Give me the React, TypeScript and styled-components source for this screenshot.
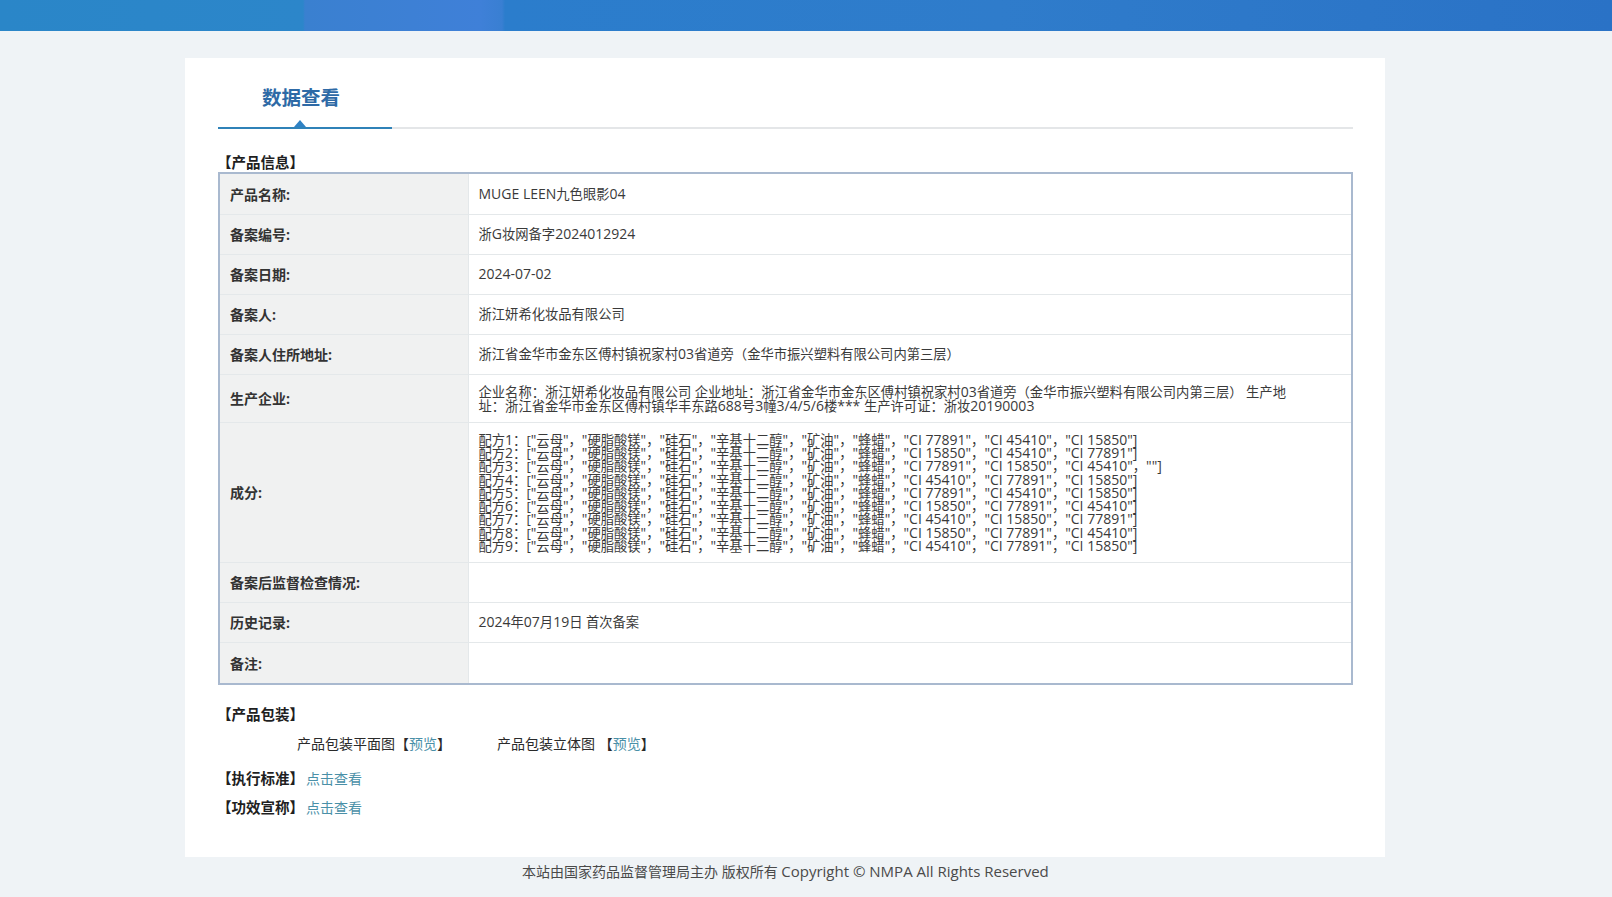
import React from "react";
import styled, { createGlobalStyle } from "styled-components";

const Global = createGlobalStyle`
  html, body { margin: 0; padding: 0; background: #eff3f6; }
  body { font-family: "Open Sans", "Noto Sans CJK SC", sans-serif; color: #333; }
`;
const Page = styled.div`
  width: 1612px;
  height: 897px;
  overflow: hidden;
  display: flex;
  flex-direction: column;
`;
const TopBar = styled.header`
  height: 31px;
  flex: none;
  background: linear-gradient(90deg, #2a86c8 0, #2c86ca 303px, #3a80d0 305px, #3f80d8 480px, #397fd2 502px, #2b7dcc 505px, #2f7ccb 1000px, #2a72c6 1612px);
`;
const Card = styled.main`
  box-sizing: border-box;
  width: 1200px;
  height: 799px;
  margin: 27px 0 0 185px;
  flex: none;
  background: #fff;
  padding: 0 32px 0 33px;
`;
const TabBar = styled.div`
  height: 69px;
  border-bottom: 2px solid #e4e6e8;
  display: flex;
`;
const Tab = styled.div`
  position: relative;
  width: 174px;
  box-sizing: border-box;
  height: 71px;
  border-bottom: 2px solid #2f82b8;
  color: #2e6aa6;
  font-size: 19.5px;
  font-weight: 700;
  line-height: 28px;
  padding: 26px 0 0 44px;
  &::after {
    content: "";
    position: absolute;
    left: 76px;
    bottom: 0;
    border-left: 6px solid transparent;
    border-right: 6px solid transparent;
    border-bottom: 7px solid #2f82c4;
  }
`;
const Heading = styled.div<{ $mt: number }>`
  margin-top: ${(p) => p.$mt}px;
  margin-left: -1px;
  font-size: 14.5px;
  line-height: 16px;
  font-weight: 700;
  color: #1f1f1f;
`;
const Table = styled.table`
  width: 1135px;
  box-sizing: border-box;
  border-collapse: collapse;
  table-layout: fixed;
  border: 2px solid #a9b9cf;
  margin-top: 1px;
  tr + tr > * { border-top: 1px solid #e4e8ea; }
`;
const Row = styled.tr<{ $h: number }>`
  height: ${(p) => p.$h}px;
`;
const Label = styled.th`
  box-sizing: border-box;
  background: #f0f1f1;
  text-align: left;
  font-size: 14px;
  font-weight: 700;
  color: #333;
  padding: 0 0 0 10px;
  border-right: 1px solid #e4e8ea;
`;
const Value = styled.td`
  font-size: 13.3px;
  line-height: 13.25px;
  color: #3a3a3a;
  padding: 1px 10px 0;
  font-weight: 400;
`;
const Line = styled.div`
  white-space: nowrap;
  height: 13.25px;
`;
const Latin = styled.span<{ $size?: number }>`
  font-size: ${(p) => p.$size ?? 14}px;
`;
const PackRow = styled.div`
  display: flex;
  margin-top: 12px;
  padding-left: 79px;
  font-size: 14px;
  line-height: 18px;
  color: #2a2a2a;
`;
const PackItem = styled.span<{ $w: number }>`
  width: ${(p) => p.$w}px;
  white-space: pre;
`;
const Link = styled.a`
  color: #4a90a8;
  font-weight: 400;
  font-size: 14px;
  text-decoration: none;
`;
const InlineHeading = styled(Heading)`
  display: flex;
  gap: 2px;
  line-height: 18px;
`;
const Footer = styled.footer`
  margin: 5px 0 0 522px;
  font-size: 14px;
  line-height: 18px;
  color: #4a4a4a;
  white-space: nowrap;
`;

const mix = (text: string, size?: number) =>
  text.split(/([A-Za-z0-9\-\/*©"][A-Za-z0-9\-\/*© ]*"?\]?)/).map((part, i) =>
    i % 2 ? <Latin key={i} $size={size}>{part}</Latin> : part
  );

const base = '"云母"，"硬脂酸镁"，"硅石"，"辛基十二醇"，"矿油"，"蜂蜡"，';
const formulas = [
  '"CI 77891"，"CI 45410"，"CI 15850"]',
  '"CI 15850"，"CI 45410"，"CI 77891"]',
  '"CI 77891"，"CI 15850"，"CI 45410"，""]',
  '"CI 45410"，"CI 77891"，"CI 15850"]',
  '"CI 77891"，"CI 45410"，"CI 15850"]',
  '"CI 15850"，"CI 77891"，"CI 45410"]',
  '"CI 45410"，"CI 15850"，"CI 77891"]',
  '"CI 15850"，"CI 77891"，"CI 45410"]',
  '"CI 45410"，"CI 77891"，"CI 15850"]',
];

export default function App() {
  return (
    <Page>
      <Global />
      <TopBar />
      <Card>
        <TabBar>
          <Tab>数据查看</Tab>
        </TabBar>
        <Heading $mt={26}>【产品信息】</Heading>
        <Table>
          <colgroup>
            <col style={{ width: 249 }} />
            <col />
          </colgroup>
          <tbody>
            <Row $h={41}><Label>产品名称:</Label><Value>{mix("MUGE LEEN九色眼影04")}</Value></Row>
            <Row $h={40}><Label>备案编号:</Label><Value>{mix("浙G妆网备字2024012924")}</Value></Row>
            <Row $h={40}><Label>备案日期:</Label><Value>{mix("2024-07-02")}</Value></Row>
            <Row $h={40}><Label>备案人:</Label><Value>浙江妍希化妆品有限公司</Value></Row>
            <Row $h={40}><Label>备案人住所地址:</Label><Value>{mix("浙江省金华市金东区傅村镇祝家村03省道旁（金华市振兴塑料有限公司内第三层）")}</Value></Row>
            <Row $h={48}>
              <Label>生产企业:</Label>
              <Value>
                <Line>{mix("企业名称：浙江妍希化妆品有限公司 企业地址：浙江省金华市金东区傅村镇祝家村03省道旁（金华市振兴塑料有限公司内第三层） 生产地")}</Line>
                <Line>{mix("址：浙江省金华市金东区傅村镇华丰东路688号3幢3/4/5/6楼*** 生产许可证：浙妆20190003")}</Line>
              </Value>
            </Row>
            <Row $h={140}>
              <Label>成分:</Label>
              <Value>
                {formulas.map((f, i) => (
                  <Line key={i}>{mix(`配方${i + 1}：[${base}${f}`)}</Line>
                ))}
              </Value>
            </Row>
            <Row $h={40}><Label>备案后监督检查情况:</Label><Value /></Row>
            <Row $h={40}><Label>历史记录:</Label><Value>{mix("2024年07月19日 首次备案")}</Value></Row>
            <Row $h={42}><Label>备注:</Label><Value /></Row>
          </tbody>
        </Table>
        <Heading $mt={22}>【产品包装】</Heading>
        <PackRow>
          <PackItem $w={200}>产品包装平面图【<Link>预览</Link>】</PackItem>
          <PackItem $w={200}>产品包装立体图 【<Link>预览</Link>】</PackItem>
        </PackRow>
        <InlineHeading $mt={17}>【执行标准】<Link>点击查看</Link></InlineHeading>
        <InlineHeading $mt={11}>【功效宣称】<Link>点击查看</Link></InlineHeading>
      </Card>
      <Footer>本站由国家药品监督管理局主办 版权所有 <Latin $size={15}>Copyright © NMPA All Rights Reserved</Latin></Footer>
    </Page>
  );
}
